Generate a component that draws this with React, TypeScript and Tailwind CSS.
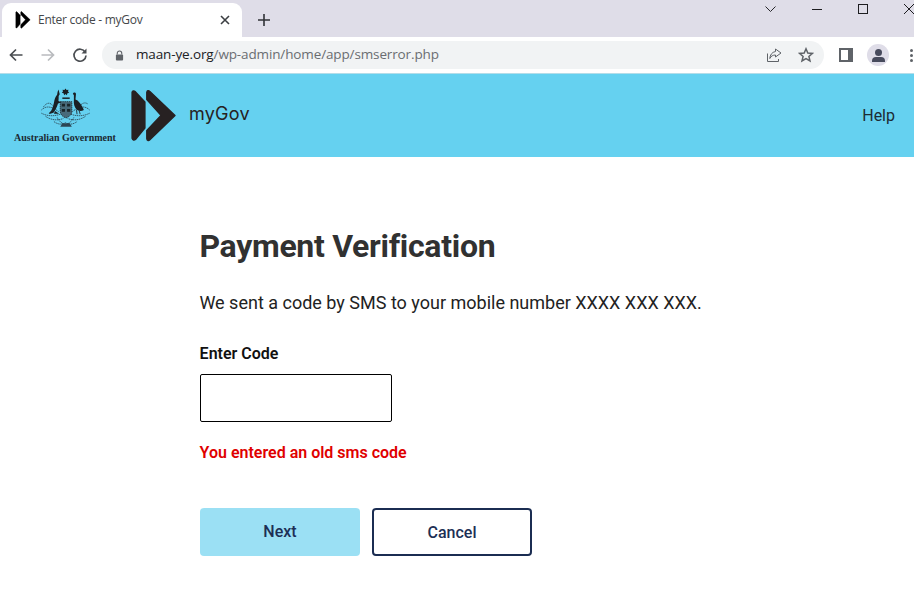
import React from "react";

function Play({ className, color }: { className?: string; color: string }) {
  return (
    <svg viewBox="-1 -1 47 54" className={className}>
      <path d="M1.2 2.2 C1.6 0.8 3 0.6 4 1.6 L13.8 12 V38 L4.4 49.4 C3.2 50.4 1.6 50 1.2 48.4 Z" fill={color} stroke={color} strokeWidth="1.6" strokeLinejoin="round" />
      <path d="M15.8 2.4 C16 0.6 17.6 0.2 18.6 1.2 L44 25.4 L18.6 50 C17.4 51 16 50.4 15.8 48.6 V40.5 L30 25.4 L15.8 9.6 Z" fill={color} stroke={color} strokeWidth="1.4" strokeLinejoin="round" />
    </svg>
  );
}

function Crest() {
  return (
    <svg viewBox="0 0 54 40" className="w-[57px] h-[42px]">
      <g fill="none" stroke="#2b4654" strokeWidth="0.8" strokeDasharray="1.3 0.6">
        <path d="M4 21 C9 16 15 18 21 23 M50 21 C45 16 39 18 33 23" />
        <path d="M4 24 C10 27 16 27 22 25 M50 24 C44 27 38 27 32 25" />
        <path d="M6 18 C9 14 12 13 15 17 M48 15 C45 13 42 15 40 18" />
        <path d="M8 27 C14 31 20 31 25 29 M46 27 C40 31 34 31 29 29" />
        <path d="M16 32 C20 35 24 35 27 33 C30 35 34 35 38 32" />
        <path d="M19 28 C21 32 24 34 27 35 C30 34 33 32 35 28" />
      </g>
      <path d="M22 13 H33 V22 C33 26 30 27.5 27.5 28.5 C25 27.5 22 26 22 22 Z" fill="#486a7a" stroke="#1f2a30" strokeWidth="0.8" strokeDasharray="1.4 0.6" />
      <path d="M23.5 15 H26.5 V17.5 H23.5 Z M28.5 15 H31.5 V17.5 H28.5 Z M23.5 20 H26.5 V22.5 H23.5 Z M28.5 20 H31.5 V22.5 H28.5 Z" fill="#1a2529" />
      <path d="M19.5 3.5 L20.5 1.5 L21 4 L21.5 6 L20.5 7.5 C20.5 10 20.5 13 19.5 16 C18.5 19 17 22 15.5 23.5 L12.5 24.5 C11 24.5 10.5 24 12 23 C14 21.5 15 18 16 14 C16.5 11 17.5 8 19 6.5 Z" fill="#1a2025" />
      <path d="M19 12 L23 13.5 L19.5 15 Z M17 22 L21 24.5 L16 24.5 Z" fill="#1a2025" />
      <path d="M34 5.5 C34.5 4 36.5 4 37 5.5 L36.5 11 C39 11.5 42.5 16 44.5 21 C42 22.5 39 22 37.5 20.5 C35.5 18.5 34.5 15 35 11 L35 7 Z" fill="#1a2025" />
      <path d="M37.5 21 L38 25 M40 21.5 L41 25" stroke="#1a2025" strokeWidth="0.8" />
      <path d="M27 0.5 L28 2 L29.8 1.7 L29.4 3.3 L30.5 4.5 L28.8 5 L28.3 6.8 L27 5.8 L25.7 6.8 L25.2 5 L23.5 4.5 L24.6 3.3 L24.2 1.7 L26 2 Z" fill="#1a2025" />
      <path d="M24 9 H31 V10.4 H24 Z" fill="#1a2025" />
      <path d="M24 33.5 H31 L33 37 H22 Z" fill="#2b4654" />
    </svg>
  );
}

export default function App() {
  return (
    <div className="w-[914px] h-[605px] overflow-hidden bg-white font-['Roboto',sans-serif] relative">
      {/* tab strip */}
      <div className="h-[37px] bg-[#dfdde8] flex items-end relative">
        <div className="ml-[2px] w-[240px] h-[34px] bg-white rounded-t-[9px] flex items-center pl-[13px] pr-[9px]">
          <Play className="w-[16px] h-[18px]" color="#000000" />
          <span className="ml-[7px] text-[12px] text-[#45474a] font-['Open_Sans','Liberation_Sans',sans-serif] flex-1 leading-none tracking-[-0.27px]">Enter code - myGov</span>
          <svg viewBox="0 0 12 12" className="w-[12px] h-[12px] mr-[2px]"><path d="M2 2 L10 10 M10 2 L2 10" stroke="#3c3f43" strokeWidth="1.6" /></svg>
        </div>
        <svg viewBox="0 0 14 14" className="ml-[15px] mb-[10px] w-[14px] h-[14px]"><path d="M7 1 V13 M1 7 H13" stroke="#303236" strokeWidth="1.6" /></svg>
        <div className="absolute right-0 top-0 h-[18px] flex items-center gap-[36px]">
          <svg viewBox="0 0 11 7" className="w-[11px] h-[7px]"><path d="M0.5 0.5 L5.5 5.5 L10.5 0.5" fill="none" stroke="#26262a" strokeWidth="1" /></svg>
          <div className="w-[10px] h-px bg-[#1d1d20]" />
          <div className="w-[10px] h-[10px] border border-[#1d1d20]" />
          <svg viewBox="0 0 10 10" className="w-[10px] h-[10px]"><path d="M0 0 L10 10 M10 0 L0 10" stroke="#1d1d20" strokeWidth="1" /></svg>
        </div>
      </div>
      {/* toolbar */}
      <div className="h-[36px] bg-white flex items-center relative">
        <svg viewBox="0 0 16 16" className="ml-[8px] w-[16px] h-[16px]"><path d="M14.5 8 H2.5 M8 2.5 L2.5 8 L8 13.5" fill="none" stroke="#4a4d51" strokeWidth="1.7" /></svg>
        <svg viewBox="0 0 16 16" className="ml-[16px] w-[16px] h-[16px]"><path d="M1.5 8 H13.5 M8 2.5 L13.5 8 L8 13.5" fill="none" stroke="#b9bbbe" strokeWidth="1.7" /></svg>
        <svg viewBox="0 0 16 16" className="ml-[16px] w-[16px] h-[16px]"><path d="M13.2 5.2 A6 6 0 1 0 14 8.5" fill="none" stroke="#4a4d51" strokeWidth="1.7" /><path d="M14.5 1.5 V6.5 H9.5 Z" fill="#4a4d51" /></svg>
        <div className="ml-[14px] w-[722px] h-[28px] rounded-full bg-[#f1f3f4] flex items-center pl-[13px]">
          <svg viewBox="0 0 10 12" className="w-[9px] h-[11px]"><path d="M2.5 5 V3.5 A2.5 2.5 0 0 1 7.5 3.5 V5" fill="none" stroke="#5f6368" strokeWidth="1.2" /><rect x="1" y="5" width="8" height="6.5" rx="1" fill="#5f6368" /></svg>
          <span className="ml-[12px] text-[13.5px] leading-none font-['Open_Sans','Liberation_Sans',sans-serif] tracking-[-0.13px] text-[#6a6d71]"><span className="text-[#202124]">maan-ye.org</span>/wp-admin/home/app/smserror.php</span>
          <div className="ml-auto flex items-center">
            <svg viewBox="0 0 16 16" className="w-[16px] h-[16px] mr-[16px]"><path d="M1.5 6.5 V14.5 H12.5 V12" fill="none" stroke="#5f6368" strokeWidth="1" /><path d="M9.5 2 L15 6 L9.5 10 V8 C7 8 5 9 3.8 11.5 C4 8 6 5 9.5 4.5 Z" fill="none" stroke="#5f6368" strokeWidth="1" /></svg>
            <svg viewBox="0 0 16 16" className="w-[16px] h-[16px] mr-[10px]"><path d="M8 1.8 L9.8 6 L14.4 6.4 L10.9 9.4 L12 13.9 L8 11.5 L4 13.9 L5.1 9.4 L1.6 6.4 L6.2 6 Z" fill="none" stroke="#5f6368" strokeWidth="1.5" /></svg>
          </div>
        </div>
        <div className="ml-[15px] w-[14px] h-[14px] bg-[#5f6368] flex items-center pl-[2px]"><div className="w-[7px] h-[10px] bg-white" /></div>
        <div className="ml-[14px] w-[22px] h-[22px] rounded-full bg-[#dfdde8] flex flex-col items-center justify-center">
          <div className="w-[7px] h-[7px] rounded-full bg-[#474a5c]" />
          <div className="w-[13px] h-[5px] mt-px rounded-t-[4px] bg-[#474a5c]" />
        </div>
        <div className="ml-[21px] flex flex-col gap-[2px]">
          <div className="w-[3px] h-[3px] rounded-full bg-[#5f6368]" />
          <div className="w-[3px] h-[3px] rounded-full bg-[#5f6368]" />
          <div className="w-[3px] h-[3px] rounded-full bg-[#5f6368]" />
        </div>
      </div>
      {/* site header */}
      <div className="h-[84px] bg-[#65d1f0] flex items-center border-t border-[#b4dde9]">
        <div className="ml-[14px] w-[102px] flex flex-col items-center">
          <Crest />
          <span className="text-[10px] leading-[10px] mt-[3px] font-bold whitespace-nowrap font-['Liberation_Serif',serif] text-[#1b2a33]">Australian Government</span>
        </div>
        <Play className="ml-[14px] w-[47px] h-[54px]" color="#272122" />
        <span className="ml-[12px] mb-[5px] text-[18px] text-[#272122] font-['Inter','Roboto',sans-serif] tracking-[0.25px]">myGov</span>
        <span className="ml-auto mr-[19px] text-[16px] text-[#1c2b33]">Help</span>
      </div>
      {/* content */}
      <main className="pl-[200px]">
        <h1 className="mt-[70px] -ml-[0.6px] text-[32px] leading-[38px] font-bold tracking-[-0.3px] text-[#313131]">Payment Verification</h1>
        <p className="mt-[26px] -ml-[0.6px] text-[18px] leading-[24px] text-[#222222]">We sent a code by SMS to your mobile number XXXX XXX XXX.</p>
        <label className="block mt-[29px] -ml-[0.4px] text-[16px] leading-[20px] font-semibold text-[#111111]">Enter Code</label>
        <div className="mt-[10px] w-[192px] h-[48px] border border-black rounded-[2px] bg-white" />
        <p className="mt-[21px] -ml-[0.4px] text-[16px] leading-[20px] font-semibold text-[#e00000]">You entered an old sms code</p>
        <div className="mt-[45px] flex gap-[12px]">
          <button className="w-[160px] h-[48px] rounded-[4px] bg-[#9be0f4] text-[16px] font-medium text-[#1d2f55]">Next</button>
          <button className="w-[160px] h-[48px] pt-px rounded-[4px] bg-white border-2 border-[#1b2d52] text-[16px] font-medium text-[#1d2f55]">Cancel</button>
        </div>
      </main>
    </div>
  );
}
